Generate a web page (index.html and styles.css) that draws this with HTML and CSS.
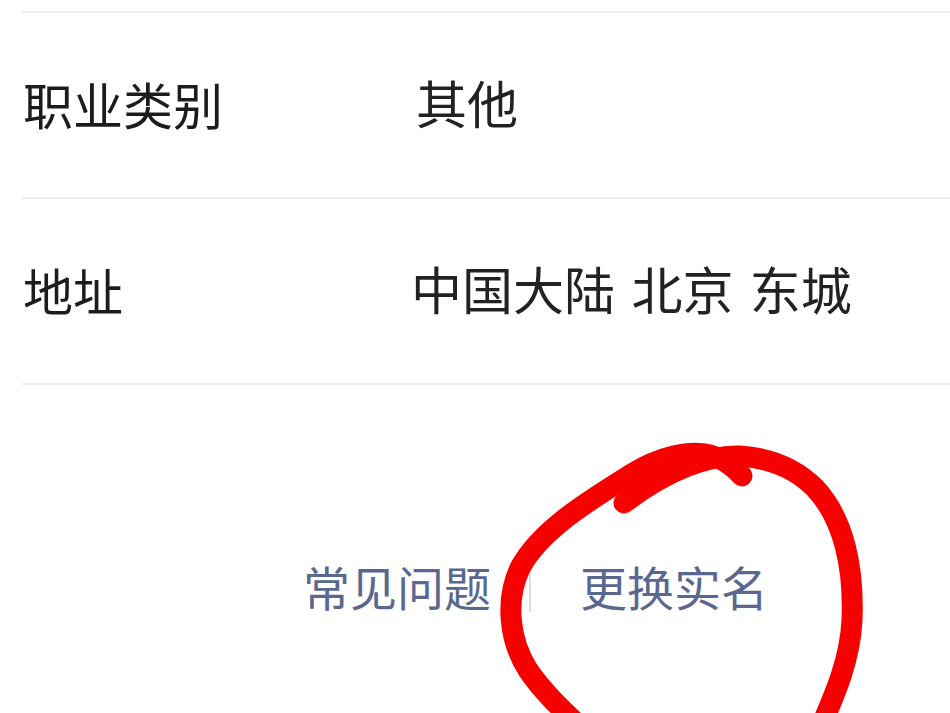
FILE: index.html
```html
<!DOCTYPE html>
<html lang="zh-CN">
<head>
<meta charset="utf-8">
<title>实名信息</title>
<link rel="stylesheet" href="styles.css">
</head>
<body>
<div class="page">
  <div class="list">
    <div class="row"><span class="label">职业类别</span><span class="value value-short">其他</span></div>
    <div class="row"><span class="label">地址</span><span class="value">中国大陆 北京 东城</span></div>
  </div>
  <div class="footer">
    <a class="link">常见问题</a>
    <span class="sep"></span>
    <a class="link">更换实名</a>
  </div>
  <svg class="mark" width="950" height="713" viewBox="0 0 950 713" xmlns="http://www.w3.org/2000/svg">
    <path d="M 815 740 C 830 705, 850 665, 852 620 C 854 570, 845 520, 815 488 C 795 468, 770 458, 740 456 C 710 455, 670 468, 624 503" />
    <path d="M 592 738 C 568 715, 545 695, 528 670 C 509 640, 505 600, 520 568 C 540 530, 590 500, 630 475 C 660 456, 690 450, 710 455 C 722 458, 733 466, 742 476" />
  </svg>
</div>
</body>
</html>
```

FILE: styles.css
```css
html, body {
  margin: 0;
  padding: 0;
  background: #ffffff;
}

body {
  font-family: "Noto Sans CJK SC", "Noto Sans", sans-serif;
}

.page {
  position: relative;
  width: 950px;
  height: 713px;
  overflow: hidden;
  background: #ffffff;
}

.list {
  margin-left: 22px;
  padding-top: 11px;
}

.row {
  display: flex;
  align-items: center;
  height: 184px;
  padding-bottom: 5px;
  box-sizing: content-box;
  height: 179px;
  border-top: 2px solid #ececec;
}

.row:last-child {
  border-bottom: 2px solid #ececec;
}

.label {
  width: 389px;
  padding-left: 1px;
  box-sizing: border-box;
  font-size: 50px;
  line-height: 1;
  color: #1c1c1c;
}

.value {
  font-size: 51px;
  line-height: 1;
  word-spacing: 5px;
  color: #222222;
}

.value-short {
  padding-left: 5px;
}

.footer {
  display: flex;
  align-items: center;
  margin-top: 170px;
  padding-left: 303px;
  height: 60px;
}

.link {
  font-size: 47px;
  line-height: 1;
  color: #5a6890;
  text-decoration: none;
}

.sep {
  width: 2px;
  height: 40px;
  margin: 14px 49px 0 38px;
  background: #dddddd;
}

.mark {
  position: absolute;
  left: 0;
  top: 0;
  pointer-events: none;
}

.mark path {
  fill: none;
  stroke: #f60000;
  stroke-width: 21;
  stroke-linecap: round;
  stroke-linejoin: round;
}
```
